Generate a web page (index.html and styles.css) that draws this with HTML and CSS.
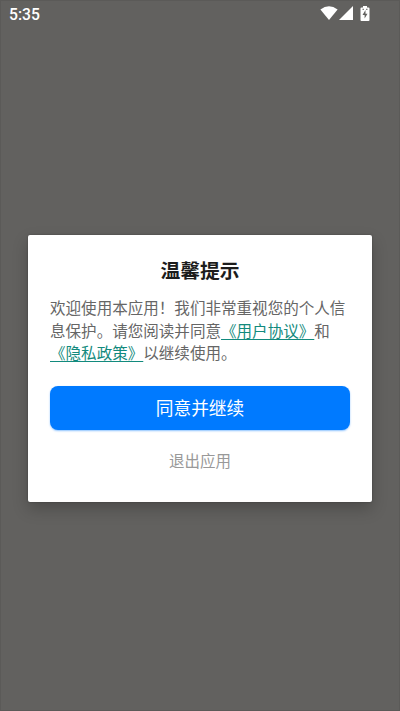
FILE: index.html
```html
<!DOCTYPE html>
<html lang="zh-CN">
<head>
<meta charset="utf-8">
<title>温馨提示</title>
<link rel="stylesheet" href="styles.css">
</head>
<body>
<div class="screen">
  <header class="status">
    <span class="time">5:35</span>
    <div class="icons">
      <svg class="wifi" width="18" height="14" viewBox="0 0 18 14"><path d="M.4 3.500Q9-3.200 17.600 3.500L9 14Z" fill="#fff"/></svg>
      <svg class="signal" width="14" height="14" viewBox="0 0 14 14"><path d="M14 0V14H0Z" fill="#fff"/></svg>
      <svg class="battery" width="10" height="15" viewBox="0 0 10 15"><path d="M3 0H7V1.500H8.500Q9.500 1.500 9.500 2.500V14Q9.500 15 8.500 15H1.500Q.5 15 .5 14V2.500Q.5 1.500 1.500 1.500H3Z" fill="#fff"/><path d="M5.500 4L2.500 9H4.600V12.500L7.500 7.700H5.500Z" fill="#62615f"/><path d="M2.500 3.300H4M6 3.300H7.500" stroke="#62615f"/></svg>
    </div>
  </header>
  <main class="stage">
    <section class="dialog">
      <h1 class="title">温馨提示</h1>
      <p class="message">欢迎使用本应用！我们非常重视您的个人信<br>息保护。请您阅读并同意<a class="link">《用户协议》</a>和<br><a class="link">《隐私政策》</a>以继续使用。</p>
      <button class="agree">同意并继续</button>
      <button class="exit">退出应用</button>
    </section>
  </main>
</div>
</body>
</html>
```

FILE: styles.css
```css
* { box-sizing: border-box; }
body {
  margin: 0;
  font-family: "Noto Sans CJK SC", sans-serif;
}
.screen {
  display: flex;
  flex-direction: column;
  height: 711px;
  background: #62615f;
  border: 1px solid #5b5a58;
  overflow: hidden;
}
.status {
  display: flex;
  justify-content: space-between;
  height: 28px;
  padding: 5px 29px 0 8px;
}
.time {
  font: 500 15.700px/18px Roboto, sans-serif;
  color: #fff;
}
.icons { display: flex; align-items: flex-start; }
.wifi { margin-right: 1px; }
.signal { margin-right: 7px; }
.stage { padding: 206px 27px 0; }
.dialog {
  display: flex;
  flex-direction: column;
  width: 344px;
  height: 267px;
  padding: 21px 22px 0;
  background: #fff;
  border-radius: 2px;
  box-shadow: 0 7px 16px rgba(0, 0, 0, .22), 0 0 2px rgba(0, 0, 0, .3);
}
.title {
  margin: 0;
  font-size: 19.800px;
  font-weight: 700;
  line-height: 28px;
  text-align: center;
  color: #1c1c1c;
}
.message {
  margin: 12px 0 0;
  font-size: 15.550px;
  font-weight: 400;
  line-height: 22.600px;
  white-space: nowrap;
  color: #666;
}
.link {
  color: #128a7d;
  text-decoration: underline;
  text-decoration-thickness: 1px;
  text-underline-offset: 2px;
}
.agree, .exit {
  padding: 0;
  border: 0;
  font-family: inherit;
  text-align: center;
}
.agree {
  height: 44px;
  margin-top: 22px;
  border-radius: 8px;
  background: #007aff;
  box-shadow: 0 1px 2px rgba(0, 122, 255, .45);
  color: #fff;
  font-size: 17.700px;
  line-height: 43px;
}
.exit {
  height: 30px;
  margin-top: 15px;
  background: none;
  color: #999;
  font-size: 15.500px;
  line-height: 30px;
}
```
